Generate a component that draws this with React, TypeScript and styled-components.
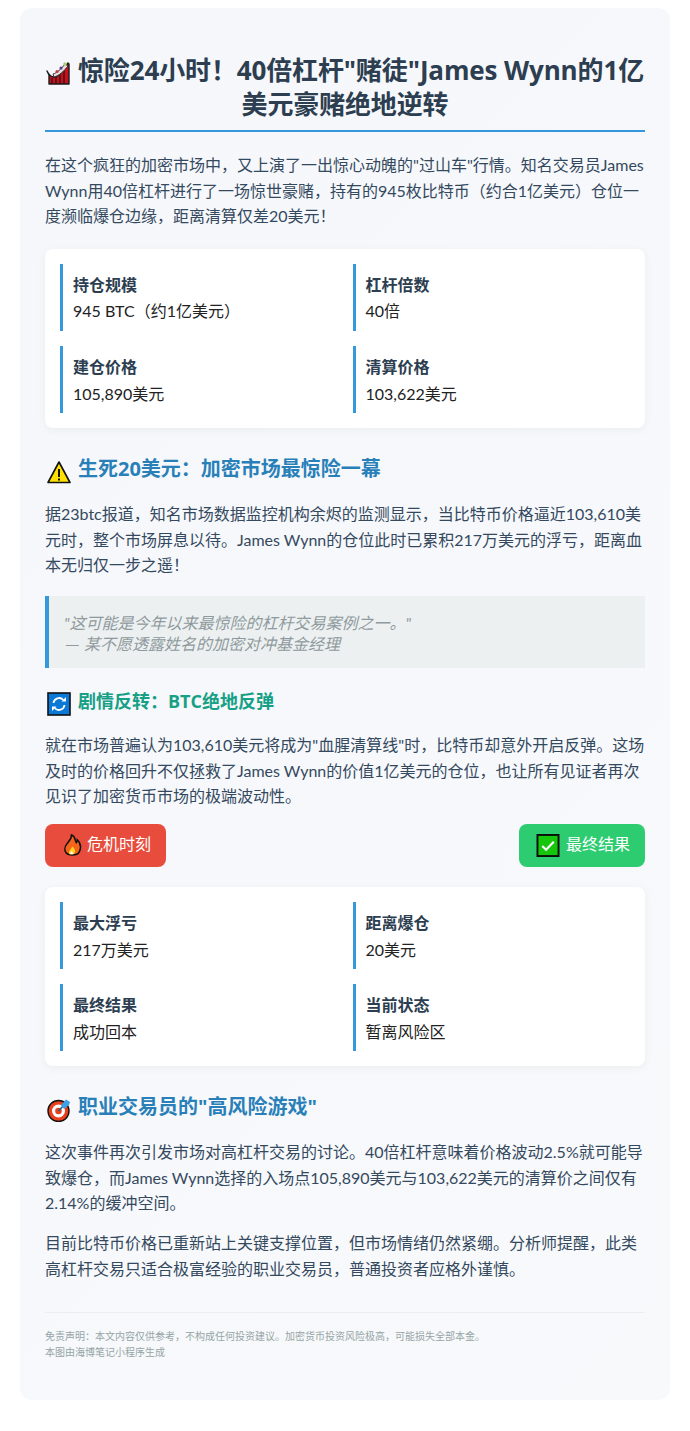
import React from "react";
import styled, { createGlobalStyle } from "styled-components";

const headFont = `"Open Sans", "Noto Sans CJK SC", sans-serif`;

const Global = createGlobalStyle`
  html, body { margin: 0; padding: 0; background: #fff; }
  body { font-family: Lato, "Noto Sans CJK SC", sans-serif; }
`;
const Page = styled.div`
  padding: 8px 20px 31px;
`;
const Card = styled.main`
  width: 650px;
  box-sizing: border-box;
  height: 1392px;
  padding: 25px;
  background: linear-gradient(135deg, #f5f7fb, #f8f9fb);
  border-radius: 12px;
  color: #34495e;
  font-size: 16px;
  line-height: 25.6px;
`;
const Title = styled.h1`
  margin: 20px 0 20px;
  padding-bottom: 9px;
  border-bottom: 2px solid #3498db;
  color: #2c3e50;
  font-family: ${headFont};
  font-size: 26px;
  line-height: 34px;
  font-weight: 700;
  letter-spacing: -0.13px;
  text-align: center;
`;
const Para = styled.p<{ $gap?: number }>`
  margin: 0 0 ${(p) => p.$gap ?? 19.2}px;
`;
const Stats = styled.section`
  display: grid;
  grid-template-columns: 1fr 1fr;
  gap: 15px;
  padding: 15px;
  margin: 20px 0 25px;
  background: #fff;
  border-radius: 8px;
  box-shadow: 0 2px 10px rgba(0, 0, 0, 0.05);
`;
const Stat = styled.div`
  border-left: 3px solid #3498db;
  padding: 8px 10px 7px;
  color: #222;
`;
const StatLabel = styled.div`
  font-weight: 700;
  color: #2c3e50;
  height: 26.6px;
`;
const Heading = styled.h2<{ $color: string; $size: number }>`
  display: flex;
  align-items: center;
  gap: 7px;
  margin: 0 0 16px;
  padding-left: 2px;
  color: ${(p) => p.$color};
  font-family: ${headFont};
  font-size: ${(p) => p.$size}px;
  line-height: 1.6;
  font-weight: 700;
`;
const Quote = styled.blockquote`
  margin: 18.2px 0 18px;
  padding: 16px 15px 14px;
  background: #ecf0f1;
  border-left: 4px solid #3498db;
  color: #8f9a9c;
  font-style: italic;
  line-height: 21px;
`;
const Dash = styled.span`
  font-family: "Noto Sans CJK SC", sans-serif;
  margin-right: 2px;
`;
const Actions = styled.div`
  display: flex;
  justify-content: space-between;
`;
const Tag = styled.div<{ $bg: string }>`
  display: flex;
  align-items: center;
  gap: 4px;
  height: 43px;
  padding: 0 15px;
  background: ${(p) => p.$bg};
  color: #fff;
  border-radius: 8px;
`;
const TagText = styled.span`
  margin-top: -3px;
`;
const Divider = styled.hr`
  margin: 31px 0 15px;
  border: 0;
  border-top: 1px solid #eceff2;
`;
const Foot = styled.footer`
  color: #95a5a6;
  font-size: 10px;
  line-height: 16px;
`;
const Emoji = styled.svg<{ $w?: number; $size: number }>`
  width: ${(p) => p.$w ?? p.$size}px;
  height: ${(p) => p.$size}px;
  flex: none;
`;
const HeadEmoji = styled(Emoji)`
  margin-top: 6px;
`;
const TagEmoji = styled(Emoji)`
  margin-top: 1px;
`;
const TitleEmoji = styled(Emoji)`
  display: inline-block;
  vertical-align: -5px;
  margin-right: 8px;
`;

const Coaster = () => (
  <TitleEmoji $size={24} viewBox="0 0 24 24">
    <path d="M1 10 C3 14 5 16 8 16 C13 16 17 9 22 2 L23 3 V23 H3 V14Z" fill="#c8101c" stroke="#1a1a1a" strokeWidth="1.4" strokeLinejoin="round" />
    <path d="M6 17v6M10 16v7M14 13v10M18 9v14" stroke="#1a1a1a" strokeWidth="1.2" />
    <path d="M7 13 C11 12 15 8 19 3 L22 5 C18 10 13 15 8 16Z" fill="#eadbdb" stroke="#333" strokeWidth="1" />
    <circle cx="11" cy="10.5" r="1.5" fill="#c43a4a" />
    <circle cx="15" cy="7" r="1.5" fill="#4a3a8a" />
    <circle cx="19" cy="3" r="1.7" fill="#a9d26a" />
  </TitleEmoji>
);
const Warning = () => (
  <HeadEmoji $size={24} viewBox="0 0 24 24">
    <path d="M12 2 L23 22.5 H1Z" fill="#ffe000" stroke="#111" strokeWidth="1.6" strokeLinejoin="round" />
    <rect x="11" y="9" width="2" height="8" fill="#111" />
    <rect x="11" y="18.5" width="2" height="2" fill="#111" />
  </HeadEmoji>
);
const Refresh = () => (
  <HeadEmoji $size={24} viewBox="0 0 24 24">
    <rect x="1" y="1" width="22" height="22" fill="#0a78d7" stroke="#111" strokeWidth="1.6" />
    <path d="M6.5 11a5.6 5.6 0 0 1 9.8-3M17.5 13a5.6 5.6 0 0 1-9.8 3" fill="none" stroke="#fff" strokeWidth="1.8" />
    <path d="M14.5 9.5h4.5v-4.5ZM9.5 14.5h-4.5v4.5Z" fill="#fff" />
  </HeadEmoji>
);
const Flame = () => (
  <TagEmoji $size={23} viewBox="-2 0 24 24">
    <path d="M10 1 C15 3 13 7 15 9 C16 8 16 7 16 6 C20 10 20 15 18 19 C16 23 6 23 4 19 C1 14 5 11 7 8 C9 6 10 4 10 1Z" fill="#f6641b" stroke="#111" strokeWidth="1.6" />
    <path d="M11 13 C14 16 15 19 12 21 H8 C6 19 9 16 11 13Z" fill="#ffd21f" />
    <path d="M10 18 C12 19 12 21 11 21 H9 C8 20 9 19 10 18Z" fill="#fff" />
  </TagEmoji>
);
const Check = () => (
  <TagEmoji $w={28} $size={23} viewBox="-2 0 28 24">
    <rect x="1" y="1" width="22" height="22" fill="#16c60c" stroke="#0b0b0b" strokeWidth="2" />
    <path d="M6 12.5l4 4 8-8.5" fill="none" stroke="#fff" strokeWidth="2.2" />
  </TagEmoji>
);
const Target = () => (
  <HeadEmoji $size={24} viewBox="0 0 24 24">
    <circle cx="11.5" cy="13" r="10.5" fill="#e8401c" stroke="#111" strokeWidth="1.4" />
    <circle cx="11.5" cy="13" r="6.5" fill="#fff" />
    <circle cx="11.5" cy="13" r="3.3" fill="#e8401c" />
    <path d="M11.5 13 L17 7" stroke="#1b5f96" strokeWidth="1.6" />
    <path d="M14 7 L19 1.5 L23 4 L22 7 L17 11Z" fill="#3aa0e8" />
  </HeadEmoji>
);

const first = [
  ["持仓规模", "945 BTC（约1亿美元）"],
  ["杠杆倍数", "40倍"],
  ["建仓价格", "105,890美元"],
  ["清算价格", "103,622美元"],
];
const second = [
  ["最大浮亏", "217万美元"],
  ["距离爆仓", "20美元"],
  ["最终结果", "成功回本"],
  ["当前状态", "暂离风险区"],
];
const StatGrid = ({ items }: { items: string[][] }) => (
  <Stats>
    {items.map(([a, b]) => (
      <Stat key={a}>
        <StatLabel>{a}</StatLabel>
        {b}
      </Stat>
    ))}
  </Stats>
);

export default function App() {
  return (
    <Page>
      <Global />
      <Card>
        <Title>
          <Coaster />
          惊险24小时！40倍杠杆"赌徒"James Wynn的1亿美元豪赌绝地逆转
        </Title>
        <Para>
          在这个疯狂的加密市场中，又上演了一出惊心动魄的"过山车"行情。知名交易员James Wynn用40倍杠杆进行了一场惊世豪赌，持有的945枚比特币（约合1亿美元）仓位一度濒临爆仓边缘，距离清算仅差20美元！
        </Para>
        <StatGrid items={first} />
        <Heading $color="#2980b9" $size={20}>
          <Warning />
          生死20美元：加密市场最惊险一幕
        </Heading>
        <Para $gap={18.2}>
          据23btc报道，知名市场数据监控机构余烬的监测显示，当比特币价格逼近103,610美元时，整个市场屏息以待。James Wynn的仓位此时已累积217万美元的浮亏，距离血本无归仅一步之遥！
        </Para>
        <Quote>
          "这可能是今年以来最惊险的杠杆交易案例之一。"
          <br />
          <Dash>—</Dash> 某不愿透露姓名的加密对冲基金经理
        </Quote>
        <Heading $color="#16a085" $size={18}>
          <Refresh />
          剧情反转：BTC绝地反弹
        </Heading>
        <Para $gap={15}>
          就在市场普遍认为103,610美元将成为"血腥清算线"时，比特币却意外开启反弹。这场及时的价格回升不仅拯救了James Wynn的价值1亿美元的仓位，也让所有见证者再次见识了加密货币市场的极端波动性。
        </Para>
        <Actions>
          <Tag $bg="#e74c3c">
            <Flame />
            <TagText>危机时刻</TagText>
          </Tag>
          <Tag $bg="#2ecc71">
            <Check />
            <TagText>最终结果</TagText>
          </Tag>
        </Actions>
        <StatGrid items={second} />
        <Heading $color="#2980b9" $size={20}>
          <Target />
          职业交易员的"高风险游戏"
        </Heading>
        <Para $gap={14}>
          这次事件再次引发市场对高杠杆交易的讨论。40倍杠杆意味着价格波动2.5%就可能导致爆仓，而James Wynn选择的入场点105,890美元与103,622美元的清算价之间仅有2.14%的缓冲空间。
        </Para>
        <Para $gap={0}>
          目前比特币价格已重新站上关键支撑位置，但市场情绪仍然紧绷。分析师提醒，此类高杠杆交易只适合极富经验的职业交易员，普通投资者应格外谨慎。
        </Para>
        <Divider />
        <Foot>
          免责声明：本文内容仅供参考，不构成任何投资建议。加密货币投资风险极高，可能损失全部本金。
          <br />
          本图由海博笔记小程序生成
        </Foot>
      </Card>
    </Page>
  );
}
